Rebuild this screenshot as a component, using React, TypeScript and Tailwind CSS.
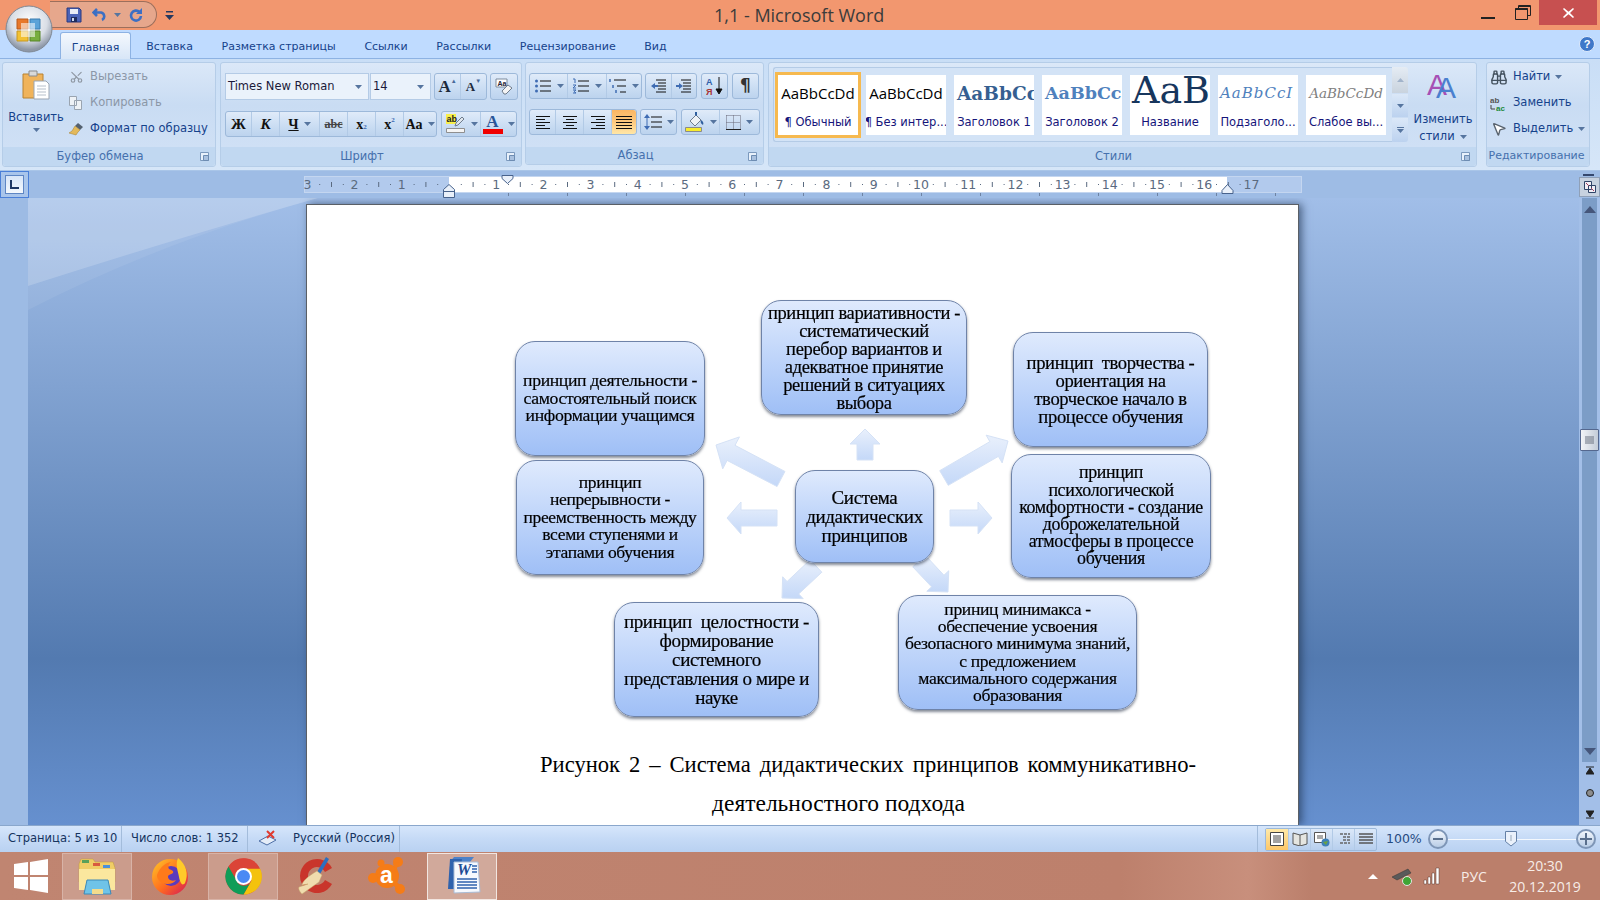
import type { ReactNode } from "react";
import { Binoculars, MousePointer2, Scissors } from "lucide-react";

const TABS = ["Вставка", "Разметка страницы", "Ссылки", "Рассылки", "Рецензирование", "Вид"];

const NODES = [
  { pos: "left-[488px] top-[266px] w-[139px] h-[93px] text-[19px] leading-[19px]", lines: ["Система", "дидактических", "принципов"] },
  { pos: "left-[454px] top-[96px] w-[206px] h-[115px] text-[18.5px] leading-[18px]", lines: ["принцип вариативности -", "систематический", "перебор вариантов и", "адекватное принятие", "решений в ситуациях", "выбора"] },
  { pos: "left-[208px] top-[137px] w-[190px] h-[115px] text-[17.7px] leading-[17.5px]", lines: ["принцип деятельности -", "самостоятельный поиск", "информации учащимся"] },
  { pos: "left-[209px] top-[256px] w-[188px] h-[115px] text-[17.5px] leading-[17.5px]", lines: ["принцип", "непрерывности -", "преемственность между", "всеми ступенями и", "этапами обучения"] },
  { pos: "left-[706px] top-[128px] w-[195px] h-[115px] text-[18.6px] leading-[18px]", lines: ["принцип  творчества -", "ориентация на", "творческое начало в", "процессе обучения"] },
  { pos: "left-[704px] top-[250px] w-[200px] h-[124px] text-[17.9px] leading-[17.2px]", lines: ["принцип", "психологической", "комфортности - создание", "доброжелательной", "атмосферы в процессе", "обучения"] },
  { pos: "left-[307px] top-[398px] w-[205px] h-[115px] text-[19px] leading-[19px]", lines: ["принцип  целостности -", "формирование", "системного", "представления о мире и", "науке"] },
  { pos: "left-[591px] top-[391px] w-[239px] h-[115px] text-[17.6px] leading-[17.2px]", lines: ["приниц минимакса -", "обеспечение усвоения", "безопасного минимума знаний,", "с предложением", "максимального содержания", "образования"] },
];

const ARROWS = [
  { b: [865, 460], t: [865, 429], s: 16, h: 30, l: 15 },
  { b: [781, 479], t: [716, 445], s: 17, h: 36, l: 17 },
  { b: [944, 478], t: [1008, 441], s: 17, h: 32, l: 16 },
  { b: [777, 518], t: [727, 518], s: 16, h: 32, l: 14 },
  { b: [950, 518], t: [992, 518], s: 16, h: 32, l: 14 },
  { b: [816, 566], t: [782, 598], s: 17, h: 30, l: 15 },
  { b: [919, 561], t: [948, 592], s: 17, h: 30, l: 15 },
];

const arrowPoints = ({ b, t, s, h, l }: { b: number[]; t: number[]; s: number; h: number; l: number }) => {
  const dx = t[0] - b[0];
  const dy = t[1] - b[1];
  const d = Math.hypot(dx, dy);
  const ux = dx / d;
  const uy = dy / d;
  const nx = -uy;
  const ny = ux;
  const nk = [t[0] - ux * l, t[1] - uy * l];
  const p = [
    [b[0] + (nx * s) / 2, b[1] + (ny * s) / 2],
    [nk[0] + (nx * s) / 2, nk[1] + (ny * s) / 2],
    [nk[0] + (nx * h) / 2, nk[1] + (ny * h) / 2],
    t,
    [nk[0] - (nx * h) / 2, nk[1] - (ny * h) / 2],
    [nk[0] - (nx * s) / 2, nk[1] - (ny * s) / 2],
    [b[0] - (nx * s) / 2, b[1] - (ny * s) / 2],
  ];
  return p.map((q) => q.join(",")).join(" ");
};

const Caret = ({ className = "" }: { className?: string }) => (
  <svg width="7" height="4" viewBox="0 0 7 4" className={className}>
    <path d="M0 0h7L3.5 4z" fill="#56759f" />
  </svg>
);

const Launcher = () => (
  <svg width="9" height="9" viewBox="0 0 9 9" className="absolute right-[6px] top-[5px]">
    <path d="M.5.5h8v8h-8z" fill="#e8f1fb" stroke="#7b99bd" />
    <path d="M3.5 3.5h5v5h-5z" fill="#a9c1df" stroke="#6d8cb2" />
  </svg>
);

const Group = ({ label, className, children }: { label: string; className: string; children: ReactNode }) => {
  const plain = label === "Редактирование";
  return (
    <div className={`flex flex-col rounded-[3px] border border-[#b5cde8] ${className}`}>
      <div className="h-[84px] bg-gradient-to-b from-[#dbe8f8] via-[#c9dcf3] to-[#cfe0f5] rounded-t-[3px]">{children}</div>
      <div className={`relative flex-1 flex items-center justify-center bg-[#c1d8f1] rounded-b-[3px] text-[#4570ad] whitespace-nowrap ${plain ? "text-[11px] pr-[3px]" : "text-[11.5px] pr-[18px]"}`}>
        {label}
        {!plain && <Launcher />}
      </div>
    </div>
  );
};

const Tools = ({ className, children }: { className: string; children: ReactNode }) => (
  <div className={`flex rounded-[3px] border border-[#9db9da] bg-gradient-to-b from-[#e0ebf9] via-[#cddff4] to-[#bcd3ee] ${className}`}>{children}</div>
);

const Cell = ({ className, children, caret }: { className: string; children: ReactNode; caret?: boolean }) => (
  <div className={`flex items-center justify-center gap-[5px] border-r border-[#b2cae6] last:border-r-0 ${className}`}>
    {children}
    {caret && <Caret />}
  </div>
);

const Lines = ({ rows, stroke = "#111" }: { rows: number[][]; stroke?: string }) => (
  <svg width="18" height="16" viewBox="0 0 18 16">
    {rows.map(([x1, x2], i) => (
      <path key={i} d={`M${x1} ${2.5 + i * 3}H${x2}`} stroke={stroke} strokeWidth="1" />
    ))}
  </svg>
);

const ALIGN_L = [[2, 16], [2, 11], [2, 16], [2, 11], [2, 16]];
const ALIGN_C = [[2, 16], [5, 13], [2, 16], [5, 13], [2, 16]];
const ALIGN_R = [[2, 16], [7, 16], [2, 16], [7, 16], [2, 16]];
const ALIGN_J = [[1, 17], [1, 17], [1, 17], [1, 17], [1, 17]];

const TitleBar = () => (
  <div className="relative h-[30px] flex items-start bg-[#f2976f]">
    <div className="ml-[50px] mt-[1px] w-[107px] h-[27px] flex items-center border border-l-0 border-[#9c6f5c] rounded-r-[14px] bg-[#e6a78c]">
      <svg width="16" height="16" viewBox="0 0 16 16" className="ml-[16px]">
        <path d="M1 1h12l2 2v12H1z" fill="#4a63b8" stroke="#28397f" />
        <path d="M4 2h8v5H4z" fill="#e8ecf6" />
        <path d="M5 10h6v5H5z" fill="#1f2c5e" />
        <path d="M6 11h2v3H6z" fill="#cfd8ee" />
      </svg>
      <svg width="16" height="15" viewBox="0 0 16 15" className="ml-[10px]">
        <path d="M5 2 1.5 5.5 5 9M2 5.5h7a4 4 0 0 1 1 7.5" fill="none" stroke="#3b6fc4" strokeWidth="2.6" />
      </svg>
      <Caret className="ml-[6px]" />
      <svg width="16" height="16" viewBox="0 0 16 16" className="ml-[7px]">
        <path d="M11.5 5A5 5 0 1 0 13 9" fill="none" stroke="#3b6fc4" strokeWidth="2.6" />
        <path d="M14 1v6H8z" fill="#3b6fc4" />
      </svg>
    </div>
    <svg width="9" height="9" viewBox="0 0 9 9" className="ml-[8px] mt-[11px]">
      <path d="M1 0h7v1.5H1z" fill="#26395f" />
      <path d="M0 4h9L4.5 9z" fill="#26395f" />
    </svg>
    <div className="absolute left-[714px] top-[2px] text-[18px] leading-[27px] text-[#3b3b3b] font-['Open_Sans']">1,1 - Microsoft Word</div>
    <div className="ml-auto flex items-start">
      <div className="w-[14px] h-[2px] mt-[17px] bg-[#222]" />
      <svg width="16" height="15" viewBox="0 0 16 15" className="ml-[20px] mt-[5px]">
        <path d="M3.5 3V.5h12v10H13" fill="none" stroke="#222" />
        <path d="M.5 3.5h12v11H.5z" fill="none" stroke="#222" />
        <path d="M.5 3.5h12M.5 4.5h12M3.5 1.5h12" stroke="#222" />
      </svg>
      <div className="ml-[8px] mr-[3px] w-[58px] h-[25px] flex items-center justify-center bg-[#c75050]">
        <svg width="11" height="10" viewBox="0 0 11 10">
          <path d="M1 0l4.5 3.7L10 0l1 1-4 4 4 4-1 1-4.5-3.7L1 10 0 9l4-4-4-4z" fill="#fff" />
        </svg>
      </div>
    </div>
    <svg width="52" height="52" viewBox="0 0 52 52" className="absolute left-[3px] top-[3px]">
      <defs>
        <radialGradient id="orb" cx="50%" cy="35%" r="60%">
          <stop offset="0" stopColor="#ffffff" />
          <stop offset="0.65" stopColor="#d9dee6" />
          <stop offset="1" stopColor="#8e98a8" />
        </radialGradient>
      </defs>
      <circle cx="26" cy="26" r="23" fill="url(#orb)" stroke="#7f8894" />
      <path d="M14 16h11v10H14z" fill="#e8782b" stroke="#b85a1c" />
      <path d="M27 16h10v10H27z" fill="#5ba3d9" stroke="#3a7cb0" />
      <path d="M14 28h11v10H14z" fill="#f2c132" stroke="#c69620" />
      <path d="M27 28h10v10H27z" fill="#78ae3e" stroke="#568429" />
      <path d="M18 20h14v14H18z" fill="#fff" fillOpacity="0.55" />
    </svg>
  </div>
);

const TabStrip = () => (
  <div className="h-[29px] flex items-end pl-[60px] bg-[#bfdbff] text-[11px] text-[#15428b] border-b border-[#8db2e3]">
    <div className="h-[27px] w-[71px] pt-[4px] flex items-center justify-center rounded-t-[3px] border border-b-0 border-[#8db2e3] bg-gradient-to-b from-[#f4f8fd] to-[#d8e6f7] relative top-[1px]">
      Главная
    </div>
    <div className="flex h-[27px] items-center pl-[1px] pt-[5px]">
      {TABS.map((t) => (
        <span key={t} className="px-[14.3px]">{t}</span>
      ))}
      <svg width="16" height="16" viewBox="0 0 16 16" className="absolute left-[1579px] top-[36px]">
        <circle cx="8" cy="8" r="7.5" fill="#3f78c9" stroke="#dfeafb" />
        <text x="8" y="12" textAnchor="middle" fontSize="11" fontWeight="700" fill="#fff" fontFamily="Liberation Sans">?</text>
      </svg>
    </div>
  </div>
);

const Clipboard = () => (
  <Group label="Буфер обмена" className="w-[214px] ml-[2px]">
    <div className="flex h-full text-[11.5px] whitespace-nowrap">
      <div className="w-[66px] flex flex-col items-center pt-[7px] text-[#15428b]">
        <svg width="28" height="30" viewBox="0 0 28 30">
          <path d="M1 4h20v24H1z" fill="#f0b35a" stroke="#b88231" />
          <path d="M7 1h8v5H7z" fill="#d9d9d9" stroke="#8b8b8b" />
          <path d="M12 11h12l3 3v15H12z" fill="#fff" stroke="#9aa5b3" />
          <path d="M15 16h9M15 19h9M15 22h9M15 25h9" stroke="#b6bfca" />
        </svg>
        <span className="mt-[10px] leading-[14px]">Вставить</span>
        <Caret className="mt-[4px]" />
      </div>
      <div className="flex flex-col pt-[1px]">
        <div className="h-[26px] flex items-center gap-[6px] text-[#8b97a7]">
          <Scissors size={14} className="w-[15px] rotate-[-90deg]" color="#8f98a3" />
          Вырезать
        </div>
        <div className="h-[26px] flex items-center gap-[6px] text-[#8b97a7]">
          <svg width="15" height="14" viewBox="0 0 15 14">
            <path d="M.5.5h7v9h-7zM5.5 4.5h7v9h-7z" fill="#eef2f6" stroke="#9aa4b0" />
          </svg>
          Копировать
        </div>
        <div className="h-[26px] flex items-center gap-[6px] text-[#15428b]">
          <svg width="15" height="14" viewBox="0 0 15 14">
            <path d="M9 1l5 4-3 3-5-4z" fill="#54616f" />
            <path d="M6 4l5 4-2 2-2 3-7-2 3-2z" fill="#e3b95a" stroke="#a57e2d" strokeWidth="0.5" />
          </svg>
          Формат по образцу
        </div>
      </div>
    </div>
  </Group>
);

const Font = () => (
  <Group label="Шрифт" className="w-[302px]">
    <div className="pl-[4px] pt-[10px] text-[#111]">
      <div className="flex h-[27px]">
        <div className="w-[144px] flex items-center justify-between pl-[2px] pr-[6px] bg-[#eaf2fb] border border-[#b4cbe6] text-[11.5px] text-[#1a1a3a] whitespace-nowrap">
          Times New Roman
          <Caret />
        </div>
        <div className="w-[61px] ml-[1px] flex items-center justify-between pl-[2px] pr-[6px] bg-[#eaf2fb] border border-[#b4cbe6] text-[11.5px] text-[#1a1a3a]">
          14
          <Caret />
        </div>
        <Tools className="w-[53px] ml-[3px] font-['Liberation_Serif'] font-bold">
          <Cell className="w-[27px] text-[17px] text-[#1d2a3c]">A<span className="text-[6px] text-[#47699a] -ml-[5px] mb-[10px]">▲</span></Cell>
          <Cell className="w-[26px] text-[13px] text-[#1d2a3c]">A<span className="text-[6px] text-[#47699a] -ml-[5px] mb-[10px]">▼</span></Cell>
        </Tools>
        <Tools className="w-[28px] ml-[3px] items-center justify-center">
          <svg width="18" height="17" viewBox="0 0 18 17">
            <path d="M1 1h11v8H1z" fill="#fff" stroke="#7d8b9d" />
            <text x="2.5" y="7.5" fontSize="7" fontWeight="700" fill="#223" fontFamily="Liberation Sans">Aa</text>
            <path d="M7 13l6-6 4 3-6 6H9z" fill="#f4f4f4" stroke="#6f7c8c" />
          </svg>
        </Tools>
      </div>
      <div className="flex h-[26px] mt-[11px] font-['Liberation_Serif'] font-bold">
        <Tools className="w-[212px]">
          <Cell className="w-[26px] text-[15px]">Ж</Cell>
          <Cell className="w-[28px] text-[15px] italic">К</Cell>
          <Cell className="w-[40px] text-[14px]" caret><span className="underline">Ч</span></Cell>
          <Cell className="w-[28px] text-[12px] line-through text-[#444]">abc</Cell>
          <Cell className="w-[28px] text-[14px]">x<span className="text-[7px] text-[#3a66b0] mt-[7px] -ml-[5px]">2</span></Cell>
          <Cell className="w-[28px] text-[14px]">x<span className="text-[7px] text-[#3a66b0] mb-[7px] -ml-[5px]">2</span></Cell>
          <Cell className="flex-1 text-[14px] gap-[3px]" caret>Aa</Cell>
        </Tools>
        <Tools className="w-[76px] ml-[4px]">
          <Cell className="w-[39px]" caret>
            <svg width="21" height="20" viewBox="0 0 21 20">
              <path d="M1 0h10v10H1z" fill="#f7ef4c" />
              <text x="1.5" y="8" fontSize="9" fontFamily="Liberation Sans" fill="#222">ab</text>
              <path d="M11 9l6-6 2 2-6 6-3 1z" fill="#dfe6ee" stroke="#6e7c8c" />
              <path d="M1.500 14.500h18v4h-18z" fill="#f5f5f5" stroke="#8f8f8f" />
            </svg>
          </Cell>
          <Cell className="flex-1" caret>
            <div className="flex flex-col items-center text-[17px] leading-[15px] text-[#2a5597]">
              A
              <div className="w-[20px] h-[5px] bg-[#f00000]" />
            </div>
          </Cell>
        </Tools>
      </div>
    </div>
  </Group>
);

const Paragraph = () => (
  <Group label="Абзац" className="w-[239px]">
    <div className="pl-[3px] pt-[10px]">
      <div className="flex h-[26px]">
        <Tools className="w-[113px]">
          <Cell className="w-[38px] gap-[2px]" caret>
            <svg width="18" height="16" viewBox="0 0 18 16">
              <path d="M6 3h11M6 8h11M6 13h11" stroke="#111" />
              <circle cx="2.500" cy="3" r="1.500" fill="#3f6cb3" /><circle cx="2.500" cy="8" r="1.500" fill="#3f6cb3" /><circle cx="2.500" cy="13" r="1.500" fill="#3f6cb3" />
            </svg>
          </Cell>
          <Cell className="w-[39px] gap-[2px]" caret>
            <svg width="18" height="16" viewBox="0 0 18 16">
              <path d="M6 3h11M6 8h11M6 13h11" stroke="#111" />
              <path d="M1 1h2v4M1 7h3L1 10h3M1 12h3l-2 1.500 2 1.500H1" fill="none" stroke="#3f6cb3" />
            </svg>
          </Cell>
          <Cell className="flex-1 gap-[2px]" caret>
            <svg width="18" height="16" viewBox="0 0 18 16">
              <path d="M5 2h12M8 8h9M11 14h6" stroke="#111" />
              <path d="M1 1v3M4 7v3M7 12v3" stroke="#3f6cb3" strokeWidth="1.500" />
            </svg>
          </Cell>
        </Tools>
        <Tools className="w-[52px] ml-[3px]">
          <Cell className="w-[26px]">
            <svg width="18" height="16" viewBox="0 0 18 16">
              <path d="M6 2h10M8 5h8M8 8h8M8 11h8M6 14h10" stroke="#111" />
              <path d="M1 8l4-3v2h3v2H5v2z" fill="#3f6cb3" />
            </svg>
          </Cell>
          <Cell className="flex-1">
            <svg width="18" height="16" viewBox="0 0 18 16">
              <path d="M6 2h10M8 5h8M8 8h8M8 11h8M6 14h10" stroke="#111" />
              <path d="M8 8L4 5v2H1v2h3v2z" fill="#3f6cb3" />
            </svg>
          </Cell>
        </Tools>
        <Tools className="w-[27px] ml-[4px] items-center justify-center">
          <svg width="18" height="20" viewBox="0 0 18 20">
            <text x="0" y="9" fontSize="9" fontWeight="700" fill="#2f5ea8" fontFamily="Liberation Sans">A</text>
            <text x="0" y="19" fontSize="9" fontWeight="700" fill="#a33" fontFamily="Liberation Sans">Я</text>
            <path d="M13 1v15M10 13l3 5 3-5z" stroke="#111" fill="#111" />
          </svg>
        </Tools>
        <Tools className="w-[27px] ml-[4px] items-center justify-center text-[17px] font-bold text-[#333]">¶</Tools>
      </div>
      <div className="flex h-[26px] mt-[10px]">
        <Tools className="w-[108px]">
          <Cell className="w-[26px]"><Lines rows={ALIGN_L} /></Cell>
          <Cell className="w-[28px]"><Lines rows={ALIGN_C} /></Cell>
          <Cell className="w-[28px]"><Lines rows={ALIGN_R} /></Cell>
          <Cell className="flex-1 rounded-r-[3px] bg-gradient-to-b from-[#fbb662] via-[#fdc97f] to-[#ffe6a6]"><Lines rows={ALIGN_J} /></Cell>
        </Tools>
        <Tools className="w-[37px] ml-[3px]">
          <Cell className="w-full gap-[3px]" caret>
            <svg width="18" height="18" viewBox="0 0 18 18">
              <path d="M7 4h11M7 9h11M7 14h11" stroke="#111" />
              <path d="M3 1l3 4H0zM3 17l3-4H0zM2.500 5h1v8h-1z" fill="#3f6cb3" />
            </svg>
          </Cell>
        </Tools>
        <Tools className="w-[79px] ml-[4px]">
          <Cell className="w-[38px]" caret>
            <svg width="20" height="20" viewBox="0 0 20 20">
              <path d="M5 9l6-6 5 5-6 6z" fill="#eef2f7" stroke="#6f7d8e" />
              <path d="M10 3V0h2v4zM16 8c2 1 3 3 2 5-2-1-3-3-2-5z" fill="#2f5f9f" />
              <path d="M.5 15.500h16v4H.5z" fill="#f7ec2e" stroke="#8b8b8b" />
            </svg>
          </Cell>
          <Cell className="flex-1" caret>
            <svg width="15" height="15" viewBox="0 0 15 15">
              <path d="M.5.5h14v14M.5.5v14M7.500.5v14M.5 7.500h14" fill="none" stroke="#667" strokeDasharray="1 1" />
              <path d="M0 14.500h15" stroke="#222" />
            </svg>
          </Cell>
        </Tools>
      </div>
    </div>
  </Group>
);

const StyleItem = ({ className, sample, label, selected }: { className: string; sample: string; label: string; selected?: boolean }) => (
  <div className={`w-[80px] h-[60px] flex flex-col items-center overflow-hidden bg-white ${selected ? "outline-[3px] outline outline-[#f6b94f]" : ""}`}>
    <div className={`h-[37px] w-full flex items-center justify-center overflow-hidden whitespace-nowrap ${className}`}>{sample}</div>
    <div className="text-[11.5px] leading-[18px] mt-[1px] text-[#15147a] whitespace-nowrap">{label}</div>
  </div>
);

const Styles = () => (
  <Group label="Стили" className="w-[709px]">
    <div className="flex pl-[4px] pt-[4px] h-full">
      <div className="w-[619px] h-[75px] flex gap-[8px] pl-[4px] pt-[7px] border border-r-0 border-[#b4cbe6] rounded-l-[3px] bg-[#d3e3f6]">
        <StyleItem selected sample="AaBbCcDd" label="¶ Обычный" className="font-['Open_Sans'] text-[15px] text-black" />
        <StyleItem sample="AaBbCcDd" label="¶ Без интер..." className="font-['Open_Sans'] text-[15px] text-black" />
        <StyleItem sample="AaBbCc" label="Заголовок 1" className="font-['DejaVu_Serif'] font-bold text-[18.5px] text-[#365f91] !justify-start pl-[3px]" />
        <StyleItem sample="AaBbCc" label="Заголовок 2" className="font-['DejaVu_Serif'] font-bold text-[17.5px] text-[#4f81bd] !justify-start pl-[3px]" />
        <StyleItem sample="AaB" label="Название" className="font-['DejaVu_Serif'] text-[38px] text-[#17365d] !items-start leading-[31px] !justify-start pl-[2px]" />
        <StyleItem sample="AaBbCcI" label="Подзаголо..." className="font-['DejaVu_Serif'] italic tracking-[1px] text-[15px] text-[#4f81bd] !justify-start pl-[2px]" />
        <StyleItem sample="AaBbCcDd" label="Слабое вы..." className="font-['DejaVu_Serif'] italic text-[13.5px] text-[#808080]" />
      </div>
      <div className="w-[16px] h-[75px] flex flex-col gap-[1px]">
        <div className="h-[26px] flex items-center justify-center bg-gradient-to-b from-[#e5ecf4] to-[#c9d3de] rounded-tr-[3px]">
          <Caret className="rotate-180 opacity-40" />
        </div>
        <div className="h-[23px] flex items-center justify-center bg-gradient-to-b from-[#dbe8f8] to-[#bcd2ef]"><Caret /></div>
        <div className="h-[24px] flex flex-col gap-[1px] items-center justify-center bg-gradient-to-b from-[#dbe8f8] to-[#bcd2ef] rounded-br-[3px]">
          <div className="w-[7px] h-[1px] bg-[#56759f]" />
          <Caret />
        </div>
      </div>
      <div className="w-[68px] pl-[2px] flex flex-col items-center text-[11.5px] leading-[17px] text-[#15428b]">
        <svg width="36" height="34" viewBox="0 0 36 34" className="overflow-visible">
          <text x="2" y="28" fontSize="30" fontFamily="Liberation Sans" fill="#a64fb5">A</text>
          <text x="11" y="31" fontSize="30" fontFamily="Liberation Sans" fill="#4a80cf">A</text>
        </svg>
        <span className="mt-[10px]">Изменить</span>
        <span className="flex items-center gap-[5px]">стили <Caret /></span>
      </div>
    </div>
  </Group>
);

const Editing = () => (
  <Group label="Редактирование" className="w-[104px] ml-[5px]">
    <div className="flex flex-col pt-[1px] pl-[3px] text-[11.5px] text-[#15428b] whitespace-nowrap">
      <div className="h-[26px] flex items-center gap-[5px]">
        <Binoculars size={17} color="#44525f" className="w-[18px]" />
        Найти <Caret />
      </div>
      <div className="h-[26px] flex items-center gap-[5px]">
        <svg width="18" height="17" viewBox="0 0 18 17">
          <text x="0" y="8" fontSize="8" fontWeight="700" fill="#555" fontFamily="Liberation Sans">ab</text>
          <text x="6" y="16" fontSize="8" fontWeight="700" fill="#1c8a3a" fontFamily="Liberation Sans">ac</text>
          <path d="M1 10v4h4" fill="none" stroke="#444" />
        </svg>
        Заменить
      </div>
      <div className="h-[26px] flex items-center gap-[5px]">
        <MousePointer2 size={16} color="#59636e" fill="#fff" className="w-[18px]" />
        Выделить <Caret />
      </div>
    </div>
  </Group>
);

const Ribbon = () => (
  <div className="h-[112px] flex gap-[4px] pt-[3px] pb-[3px] bg-gradient-to-b from-[#c9def6] to-[#d6e6f8] border-b border-[#a9c5e8]">
    <Clipboard />
    <Font />
    <div className="w-[239px] -ml-[1px]"><Paragraph /></div>
    <Styles />
    <Editing />
  </div>
);

const Ruler = () => {
  const nums = Array.from({ length: 21 }, (_, i) => i - 3);
  const cm = 47.2;
  return (
    <div className="h-[27px] flex bg-[#9ebce5]">
      <div className="w-[29px] h-[27px] flex items-center justify-center border border-[#4a7fd8] bg-[#a9c5eb]">
        <div className="w-[19px] h-[19px] border border-[#5e86c4] bg-gradient-to-b from-[#d7e5f8] to-[#f4f8fd] flex items-center justify-center">
          <svg width="10" height="9" viewBox="0 0 10 9"><path d="M1 0v8h8" fill="none" stroke="#1f3864" strokeWidth="2" /></svg>
        </div>
      </div>
      <svg width="1000" height="27" viewBox="304 171 1000 27" className="ml-[275px]">
        <rect x="304.500" y="176.500" width="997" height="16" fill="#b2caed" stroke="#c4d6f0" />
        <rect x="449" y="177" width="778" height="15" fill="#fff" />
        {nums.map((n) => (
          <g key={n}>
            {n !== 0 && n > -4 && (
              <text x={449 + Math.abs(n) * cm * Math.sign(n)} y="189" textAnchor="middle" fontSize="12.500" fill="#5a6a80" fontFamily="DejaVu Sans">
                {Math.abs(n)}
              </text>
            )}
            {n < 17 && (
              <>
                <rect x={449 + (n + 0.25) * cm} y="184" width="1" height="1" fill="#5a6a80" />
                <rect x={449 + (n + 0.5) * cm} y="182" width="1" height="5" fill="#5a6a80" />
                <rect x={449 + (n + 0.75) * cm} y="184" width="1" height="1" fill="#5a6a80" />
              </>
            )}
          </g>
        ))}
        {Array.from({ length: 14 }, (_, i) => (
          <rect key={i} x={449 + 59 * (i + 1)} y="193" width="1" height="3" fill="#6e83a3" />
        ))}
        <path d="M502 175.500h11v3l-5.500 5-5.500-5z" fill="#e9f0fa" stroke="#47628c" />
        <path d="M449 184.500l5.500 5v8h-11v-8z" fill="#e9f0fa" stroke="#47628c" />
        <path d="M443.500 191.500h11" stroke="#47628c" />
        <path d="M1227.500 184.500l5.500 6v3h-11v-3z" fill="#e9f0fa" stroke="#47628c" />
      </svg>
      <div className="ml-auto mr-0 w-[21px] relative">
        <div className="absolute left-[4px] top-[3px] w-[11px] h-[1.5px] bg-[#34486e]" />
        <div className="absolute left-0 top-[6px] w-[21px] h-[20px] flex items-center justify-center bg-[#c7d2e0] border border-[#8fa0b8]">
          <svg width="14" height="14" viewBox="0 0 14 14">
            <path d="M1.500 1.500h7v8h-7zM5.500 5.500h7v7h-7z" fill="#f1eef5" stroke="#2f4468" />
            <path d="M3 3l3 3M8 8l3 3" stroke="#a04060" />
          </svg>
        </div>
      </div>
    </div>
  );
};

const Page = () => (
  <div className="ml-[278px] mt-[6px] w-[993px] h-[621px] relative bg-white border-l border-t border-r border-[#5a5f66] shadow-[3px_0_8px_rgba(30,50,80,0.65)] font-['Liberation_Serif'] text-black">
    <div className="relative h-[541px] -mt-[1px]">
      <svg width="992" height="540" viewBox="307 204 992 540" className="absolute inset-0">
        <defs>
          <linearGradient id="arr" x1="0" y1="0" x2="0" y2="1">
            <stop offset="0" stopColor="#e9f0fc" />
            <stop offset="1" stopColor="#c4d8f8" />
          </linearGradient>
        </defs>
        {ARROWS.map((a, i) => (
          <polygon key={i} points={arrowPoints(a)} fill="url(#arr)" stroke="#d5e2f6" strokeWidth="1" />
        ))}
      </svg>
      {NODES.map((n) => (
        <div
          key={n.lines[0]}
          className={`absolute flex flex-col items-center justify-center rounded-[20px] border border-[#6f83a8] bg-gradient-to-b from-[#dfeafd] to-[#9fbff6] shadow-[0_2px_3px_rgba(50,60,80,0.6)] whitespace-pre text-center tracking-[-0.35px] [-webkit-text-stroke:0.2px_black] ${n.pos}`}
        >
          {n.lines.map((l) => (
            <span key={l} className="[filter:blur(0.3px)]">{l}</span>
          ))}
        </div>
      ))}
    </div>
    <div className="ml-[233px] w-[656px] leading-[39px] whitespace-nowrap">
      <p className="text-[22.6px] [text-align-last:justify]">Рисунок 2 – Система дидактических принципов коммуникативно-</p>
      <p className="text-[23.5px] pl-[172px]">деятельностного подхода</p>
    </div>
  </div>
);

const DocArea = () => (
  <div className="h-[627px] flex">
    <div className="w-[28px] bg-[#9dbbe4]" />
    <div className="relative flex-1 min-w-0 overflow-hidden bg-[linear-gradient(to_bottom,#a1bee8_0%,#537ab0_73.500%,#6690cf_100%)]">
      <svg width="320" height="120" viewBox="0 0 320 120" className="absolute left-0 top-0">
        <path d="M0 112Q130 45 290 0H0z" fill="#fff" fillOpacity="0.07" />
        <path d="M0 88Q150 40 290 0H0z" fill="#fff" fillOpacity="0.18" />
      </svg>
      <div className="relative"><Page /></div>
    </div>
    <div className="w-[21px] flex flex-col bg-[#a3bfe8]">
      <div className="flex-1 mx-[3px] flex flex-col items-center bg-[#7c9dc7] relative">
        <svg width="12" height="7" viewBox="0 0 12 7" className="mt-[8px]"><path d="M6 0l6 7H0z" fill="#45567a" /></svg>
        <div className="absolute top-[231px] -left-[2px] w-[19px] h-[22px] flex items-center justify-center rounded-[1px] border border-[#55688f] bg-gradient-to-r from-[#f2f4f7] to-[#c3ccd8]">
          <svg width="9" height="8" viewBox="0 0 9 8"><path d="M0 1h9M0 3h9M0 5h9M0 7h9" stroke="#6a7280" /></svg>
        </div>
        <svg width="12" height="7" viewBox="0 0 12 7" className="mt-auto mb-[7px]"><path d="M6 7l6-7H0z" fill="#45567a" /></svg>
      </div>
      <div className="h-[63px] flex flex-col items-center justify-between pb-[6px] pt-[4px]">
        <svg width="8" height="9" viewBox="0 0 8 9"><path d="M0 1h8M4 2l4 6H0z" stroke="#222" fill="#222" strokeWidth="1" /></svg>
        <div className="w-[8px] h-[8px] rounded-full bg-[#8d8d8d] border border-[#222]" />
        <svg width="8" height="9" viewBox="0 0 8 9"><path d="M0 8h8M4 7L8 1H0z" stroke="#222" fill="#222" strokeWidth="1" /></svg>
      </div>
    </div>
  </div>
);

const StatusBar = () => (
  <div className="h-[27px] flex items-center border-t border-[#8aa7cc] bg-gradient-to-b from-[#d6e6fb] via-[#c5daf6] to-[#b9d1f1] text-[11.5px] text-[#15345f] whitespace-nowrap">
    <div className="w-[122px] pl-[8px] h-full flex items-center border-r border-[#a3bcdb]">Страница: 5 из 10</div>
    <div className="w-[126px] pl-[9px] h-full flex items-center border-r border-[#a3bcdb]">Число слов: 1 352</div>
    <div className="w-[152px] pl-[10px] h-full flex items-center gap-[15px] border-r border-[#a3bcdb]">
      <svg width="20" height="18" viewBox="0 0 20 18">
        <path d="M1 11l9-5 8 4-9 5z" fill="#e5edf8" stroke="#4d6ea6" />
        <path d="M9 1l7 7M16 1L9 8" stroke="#e03a2f" strokeWidth="2" />
      </svg>
      Русский (Россия)
    </div>
    <div className="w-[858px] h-full border-r border-[#a3bcdb]" />
    <div className="ml-[7px] w-[112px] h-[23px] flex rounded-[2px] border border-[#9db9da] bg-gradient-to-b from-[#dbe8f8] to-[#b7cfee]">
      <Cell className="w-[23px] bg-gradient-to-b from-[#ffe9a8] to-[#fcc768]">
        <svg width="14" height="14" viewBox="0 0 14 14"><path d="M.5.5h13v13H.5z" fill="#fff" stroke="#444" /><path d="M3 4h8M3 6h8M3 8h8M3 10h8" stroke="#444" /></svg>
      </Cell>
      <Cell className="w-[22px]">
        <svg width="16" height="14" viewBox="0 0 16 14"><path d="M1 1l7 2 7-2v11l-7 2-7-2z" fill="#e5e5e0" stroke="#555" /><path d="M8 3v11" stroke="#555" /></svg>
      </Cell>
      <Cell className="w-[22px]">
        <svg width="16" height="15" viewBox="0 0 16 15"><path d="M.5.5h11v10H.5z" fill="#fff" stroke="#555" /><path d="M3 4h6M3 6h6" stroke="#555" /><circle cx="11.500" cy="10.500" r="4" fill="#3d7fb8" /><path d="M9 10l3 3 2-4z" fill="#6aa33f" /></svg>
      </Cell>
      <Cell className="w-[22px]">
        <svg width="14" height="12" viewBox="0 0 14 12"><path d="M3 1h10M6 4h7M6 7h7M3 10h10" stroke="#666" strokeWidth="1.500" strokeDasharray="3 1" /></svg>
      </Cell>
      <Cell className="flex-1">
        <svg width="14" height="12" viewBox="0 0 14 12"><path d="M0 1h14M0 4h14M0 7h14M0 10h14" stroke="#555" strokeWidth="1.500" /></svg>
      </Cell>
    </div>
    <span className="ml-[9px] text-[12.5px] text-[#264a7f]">100%</span>
    <div className="ml-[6px] w-[20px] h-[20px] rounded-full border-2 border-[#7e96b7] bg-gradient-to-b from-[#f3f7fc] to-[#b9cde6] flex items-center justify-center">
      <div className="w-[10px] h-[2.500px] bg-[#5a6f8c]" />
    </div>
    <div className="relative w-[128px] h-[1px] bg-[#f4f8fd]">
      <svg width="12" height="16" viewBox="0 0 12 16" className="absolute left-[57px] -top-[8px]">
        <path d="M.5.5h11v10L6 15 .5 10.500z" fill="#eaf1fb" stroke="#6480a6" />
        <path d="M6 4v6" stroke="#9ab" />
      </svg>
    </div>
    <div className="w-[20px] h-[20px] rounded-full border-2 border-[#7e96b7] bg-gradient-to-b from-[#f3f7fc] to-[#b9cde6] relative flex items-center justify-center">
      <div className="w-[12px] h-[2.500px] bg-[#5a6f8c]" />
      <div className="absolute w-[2.500px] h-[12px] bg-[#5a6f8c]" />
    </div>
  </div>
);

const Taskbar = () => (
  <div className="h-[48px] flex items-center bg-[linear-gradient(90deg,#c08571_0%,#bd806c_70%,#c88f7c_78%,#bb7f6b_82%,#bb7f6b_100%)] text-[#f7ede8] text-[14px] font-['Open_Sans']">
    <svg width="34" height="34" viewBox="0 0 34 34" className="ml-[14px]">
      <path d="M0 5l14-2v13H0zM16 3l18-3v16H16zM0 18h14v13L0 29zM16 18h18v16l-18-3z" fill="#fff" />
    </svg>
    <div className="ml-[14px] w-[70px] h-[47px] flex items-center justify-center bg-[#cb9c8c] border border-[#d8b3a7]">
      <svg width="38" height="40" viewBox="0 0 38 40">
        <path d="M1 8l2-5h12l2 3h18l2 6v14H1z" fill="#f0cd66" stroke="#bd9a3c" strokeWidth="0.500" />
        <path d="M4 4h7v3H4z" fill="#5aa05a" /><path d="M15 7h7v3h-7z" fill="#d85a40" /><path d="M25 9h7v3h-7z" fill="#4a90d8" />
        <path d="M1 13h36v21H1z" fill="#fbe79e" />
        <path d="M9 24h21l3 14H6z" fill="#6fc3e8" stroke="#3c89b8" />
        <path d="M14 33h11v5H14z" fill="#f3dc8c" />
      </svg>
    </div>
    <div className="w-[76px] flex justify-center">
      <svg width="38" height="38" viewBox="0 0 38 38">
        <defs>
          <linearGradient id="ff" x1="0" y1="0" x2="1" y2="1"><stop offset="0" stopColor="#ffc927" /><stop offset="0.55" stopColor="#ff6a1f" /><stop offset="1" stopColor="#d1165c" /></linearGradient>
        </defs>
        <circle cx="19" cy="20" r="18" fill="url(#ff)" />
        <circle cx="20" cy="19" r="10" fill="#5b3bbd" />
        <path d="M27 1c8 6 11 16 7 25-3 4-5-1-6-6-1-6-4-12-1-19z" fill="#ffcb2a" />
        <path d="M6 18c3-8 8-12 14-13-3 3-3 5-2 7 3 1 5 2 4 4-2 2-5 1-5 4 0 2 3 5 8 3-3 5-14 6-18-1-1-2-1-3-1-4z" fill="#ff7a1a" />
      </svg>
    </div>
    <div className="w-[70px] h-[47px] flex items-center justify-center bg-[#cb9c8c] border border-[#d8b3a7]">
      <svg width="37" height="37" viewBox="0 0 37 37">
        <circle cx="18.500" cy="18.500" r="18" fill="#db4437" />
        <path d="M18.500 10.500H35a18 18 0 0 1-16.500 26l8-14z" fill="#f4c20d" />
        <path d="M18.500 10.500H35A18 18 0 0 0 3.500 8.500l8 14z" fill="#db4437" />
        <path d="M3.500 8.500a18 18 0 0 0 15 28l8-14a8 8 0 0 1-15 0z" fill="#0f9d58" />
        <circle cx="18.500" cy="18.500" r="8.500" fill="#fff" />
        <circle cx="18.500" cy="18.500" r="6.500" fill="#4a8af4" />
      </svg>
    </div>
    <div className="w-[75px] flex justify-center">
      <svg width="40" height="40" viewBox="0 0 40 40">
        <path d="M36 12A17 17 0 1 0 36 28L29 24a9 9 0 1 1 0-8z" fill="#c9352b" />
        <path d="M30 1l3 2-9 15-3-2z" fill="#2c6fc0" />
        <path d="M21 15l5 4-3 7-17 12C4 36 2 33 3 31l9-3-6 1c0-3 6-9 15-14z" fill="#f0dcae" stroke="#c6a66b" strokeWidth="0.500" />
      </svg>
    </div>
    <div className="w-[68px] flex justify-center">
      <div className="relative w-[38px] h-[40px]">
        <svg width="38" height="40" viewBox="0 0 38 40" className="absolute inset-0">
          <circle cx="19" cy="20" r="12" fill="#f57c17" />
          <circle cx="30" cy="6" r="5" fill="#f57c17" />
          <circle cx="5" cy="22" r="5" fill="#f57c17" />
          <circle cx="13" cy="7" r="3.500" fill="#f57c17" />
          <circle cx="32" cy="33" r="5" fill="#f57c17" />
          <path d="M25 8l6-2-3 10zM8 19l5-3v8zM24 28l6 6 3-4-8-8z" fill="#f57c17" />
        </svg>
        <span className="absolute left-[12px] top-[2px] text-[23px] font-bold text-white font-['Liberation_Sans']">a</span>
      </div>
    </div>
    <div className="ml-[6px] w-[70px] h-[47px] flex items-center justify-center bg-[#d1a99b] border border-[#f2e6e1]">
      <svg width="40" height="40" viewBox="0 0 40 40">
        <path d="M12 1h20L28 6H8z" fill="#4c82c9" />
        <path d="M8 3h12L16 33H6z" fill="#2f62ad" />
        <path d="M12 6h24l2 30-26 1z" fill="#f6f9fe" stroke="#a9bcd6" />
        <text x="15" y="19" fontSize="16" fontWeight="700" fontStyle="italic" fill="#1e4c94" fontFamily="Liberation Serif">W</text>
        <path d="M30 10h5M30 13h5M30 16h5M15 23h20M15 26h20M15 29h20M15 32h20" stroke="#2f62ad" strokeWidth="1.500" />
      </svg>
    </div>
    <div className="ml-auto flex items-center">
      <svg width="12" height="7" viewBox="0 0 12 7"><path d="M6 1l5 5H1z" fill="#fff" /></svg>
      <svg width="24" height="20" viewBox="0 0 24 20" className="ml-[12px]">
        <path d="M1 11L17 3l3 4L6 14z" fill="#5a5a5a" stroke="#333" strokeWidth="0.500" />
        <circle cx="16" cy="15" r="4.500" fill="#3fa535" stroke="#e5e5e5" />
      </svg>
      <svg width="18" height="18" viewBox="0 0 18 18" className="ml-[8px]">
        <path d="M1 13h2.500v4H1zM5 10h2.500v7H5zM9 6h2.500v11H9zM13 1h3v16h-3z" fill="#fff" stroke="#5a3a30" strokeWidth="0.500" />
      </svg>
      <span className="ml-[20px] w-[44px]">РУС</span>
      <div className="w-[80px] mr-[15px] flex flex-col items-center leading-[21px]">
        <span>20:30</span>
        <span>20.12.2019</span>
      </div>
    </div>
  </div>
);

export default function App() {
  return (
    <div className="w-[1600px] h-[900px] overflow-hidden flex flex-col font-['DejaVu_Sans',sans-serif]">
      <TitleBar />
      <TabStrip />
      <Ribbon />
      <Ruler />
      <DocArea />
      <StatusBar />
      <Taskbar />
    </div>
  );
}
